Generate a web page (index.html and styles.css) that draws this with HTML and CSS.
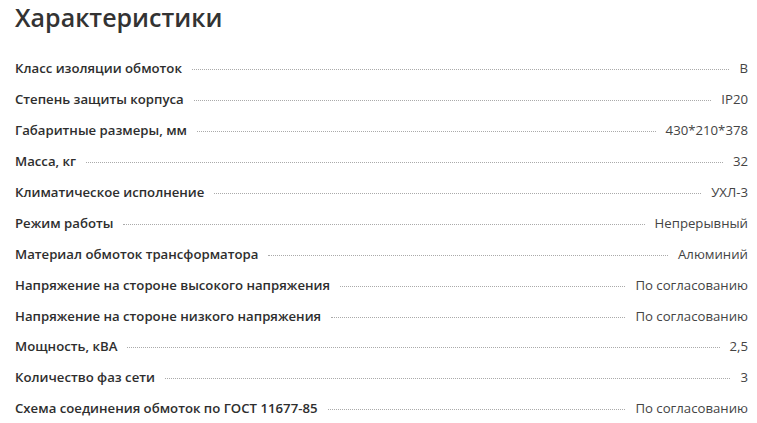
FILE: index.html
```html
<!DOCTYPE html>
<html lang="ru">
<head>
<meta charset="utf-8">
<link rel="stylesheet" href="styles.css">
</head>
<body>
<section class="specs">
  <h2 class="specs-title">Характеристики</h2>
  <ul class="spec-list">
    <li class="spec"><span class="spec-name">Класс изоляции обмоток</span><span class="spec-dots"></span><span class="spec-value">B</span></li>
    <li class="spec"><span class="spec-name">Степень защиты корпуса</span><span class="spec-dots"></span><span class="spec-value">IP20</span></li>
    <li class="spec"><span class="spec-name">Габаритные размеры, мм</span><span class="spec-dots"></span><span class="spec-value">430*210*378</span></li>
    <li class="spec"><span class="spec-name">Масса, кг</span><span class="spec-dots"></span><span class="spec-value">32</span></li>
    <li class="spec"><span class="spec-name">Климатическое исполнение</span><span class="spec-dots"></span><span class="spec-value">УХЛ-3</span></li>
    <li class="spec"><span class="spec-name">Режим работы</span><span class="spec-dots"></span><span class="spec-value">Непрерывный</span></li>
    <li class="spec"><span class="spec-name">Материал обмоток трансформатора</span><span class="spec-dots"></span><span class="spec-value">Алюминий</span></li>
    <li class="spec"><span class="spec-name">Напряжение на стороне высокого напряжения</span><span class="spec-dots"></span><span class="spec-value">По согласованию</span></li>
    <li class="spec"><span class="spec-name">Напряжение на стороне низкого напряжения</span><span class="spec-dots"></span><span class="spec-value">По согласованию</span></li>
    <li class="spec"><span class="spec-name">Мощность, кВА</span><span class="spec-dots"></span><span class="spec-value">2,5</span></li>
    <li class="spec"><span class="spec-name">Количество фаз сети</span><span class="spec-dots"></span><span class="spec-value">3</span></li>
    <li class="spec"><span class="spec-name">Схема соединения обмоток по ГОСТ 11677-85</span><span class="spec-dots"></span><span class="spec-value">По согласованию</span></li>
  </ul>
</section>
</body>
</html>
```

FILE: styles.css
```css
html, body {
  margin: 0;
  padding: 0;
  background: #fff;
}
body {
  font-family: "Open Sans", "Noto Sans", sans-serif;
  color: #333;
}
.specs {
  padding: 2px 9px 0 15px;
}
.specs-title {
  margin: 0;
  font-size: 25px;
  font-weight: 600;
  line-height: 30px;
  color: #333;
}
.spec-list {
  list-style: none;
  margin: 27.4px 0 0;
  padding: 0;
}
.spec {
  display: flex;
  align-items: baseline;
  height: 30.9px;
}
.spec-name {
  font-size: 13.2px;
  font-weight: 600;
  color: #2e2e2e;
}
.spec-dots {
  flex: 1;
  margin: 0 10px;
  border-bottom: 1px dotted #aaa;
  transform: translateY(-3px);
}
.spec-value {
  font-size: 13.2px;
  font-weight: 400;
  color: #444;
}
```
